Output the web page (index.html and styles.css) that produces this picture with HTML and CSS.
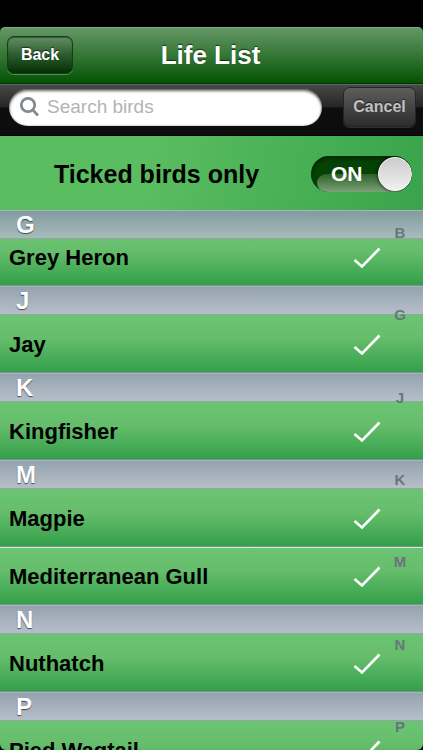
FILE: index.html
```html
<!DOCTYPE html>
<html lang="en">
<head>
<meta charset="utf-8">
<meta name="viewport" content="width=device-width, initial-scale=1">
<title>Life List</title>
<link rel="stylesheet" href="styles.css">
</head>
<body>
<div class="app">
  <header class="navbar">
    <button class="btn btn-back" type="button">Back</button>
    <h1 class="title">Life List</h1>
  </header>
  <form class="searchbar">
    <label class="search">
      <svg class="search-icon" viewBox="0 0 20 20" aria-hidden="true"><circle cx="8" cy="8" r="6.7"/><path d="M12.8 12.8L18 18.5"/></svg>
      <input class="search-input" type="search" placeholder="Search birds" aria-label="Search birds">
    </label>
    <button class="btn btn-cancel" type="button">Cancel</button>
  </form>
  <div class="filter">
    <label class="filter-label" for="ticked">Ticked birds only</label>
    <span class="switch">
      <input class="switch-input" id="ticked" type="checkbox" checked>
      <span class="switch-text">ON</span>
      <span class="knob"></span>
    </span>
  </div>
  <main class="list">
    <section>
      <h2 class="letter letter-pinned">G</h2>
      <ul class="birds">
        <li class="bird">Grey Heron<svg class="tick" viewBox="0 0 28 22" aria-hidden="true"><path d="M1.5 13L9 19.5L26.5 1.5"/></svg></li>
      </ul>
    </section>
    <section>
      <h2 class="letter">J</h2>
      <ul class="birds">
        <li class="bird">Jay<svg class="tick" viewBox="0 0 28 22" aria-hidden="true"><path d="M1.5 13L9 19.5L26.5 1.5"/></svg></li>
      </ul>
    </section>
    <section>
      <h2 class="letter">K</h2>
      <ul class="birds">
        <li class="bird">Kingfisher<svg class="tick" viewBox="0 0 28 22" aria-hidden="true"><path d="M1.5 13L9 19.5L26.5 1.5"/></svg></li>
      </ul>
    </section>
    <section>
      <h2 class="letter">M</h2>
      <ul class="birds">
        <li class="bird">Magpie<svg class="tick" viewBox="0 0 28 22" aria-hidden="true"><path d="M1.5 13L9 19.5L26.5 1.5"/></svg></li>
        <li class="bird">Mediterranean Gull<svg class="tick" viewBox="0 0 28 22" aria-hidden="true"><path d="M1.5 13L9 19.5L26.5 1.5"/></svg></li>
      </ul>
    </section>
    <section>
      <h2 class="letter">N</h2>
      <ul class="birds">
        <li class="bird">Nuthatch<svg class="tick" viewBox="0 0 28 22" aria-hidden="true"><path d="M1.5 13L9 19.5L26.5 1.5"/></svg></li>
      </ul>
    </section>
    <section>
      <h2 class="letter">P</h2>
      <ul class="birds">
        <li class="bird">Pied Wagtail<svg class="tick" viewBox="0 0 28 22" aria-hidden="true"><path d="M1.5 13L9 19.5L26.5 1.5"/></svg></li>
      </ul>
    </section>
    <nav class="index" aria-label="Sections">
      <span>B</span><span>G</span><span>J</span><span>K</span><span>M</span><span>N</span><span>P</span>
    </nav>
  </main>
</div>
</body>
</html>
```
FILE: styles.css
```css
* {
  box-sizing: border-box;
}

body {
  margin: 0;
  background: #000;
  font-family: "Liberation Sans", Arial, sans-serif;
}

h1, h2, ul {
  margin: 0;
  padding: 0;
}

.app {
  display: flex;
  flex-direction: column;
  height: 100vh;
  padding-top: 27px;
  overflow: hidden;
}

/* Title bar */
.navbar {
  display: grid;
  grid-template-columns: 1fr auto 1fr;
  align-items: center;
  flex: none;
  height: 57px;
  padding: 0 9px 2px 7px;
  border-top: 1px solid #7fab80;
  border-bottom: 1px solid #013801;
  border-radius: 5px 5px 0 0;
  background: linear-gradient(#649765, #347636 50%, #035303);
}

.title {
  color: #fff;
  font-size: 26px;
  line-height: 30px;
  text-shadow: 0 -1px 1px rgba(0, 0, 0, .6);
}

.btn {
  padding: 0;
  border-radius: 7px;
  font: bold 16px/20px "Liberation Sans", Arial, sans-serif;
  text-shadow: 0 -1px 1px rgba(0, 0, 0, .6);
}

.btn-back {
  width: 66px;
  height: 38px;
  border: 1px solid #123f14;
  background: linear-gradient(#648e66, #2c5c2e 50%, #022f03);
  box-shadow: 0 1px 0 rgba(255, 255, 255, .3), inset 0 1px 1px rgba(0, 0, 0, .4);
  color: #fff;
}

/* Search bar */
.searchbar {
  display: flex;
  align-items: center;
  gap: 21px;
  flex: none;
  height: 52px;
  padding: 0 7px 6px 9px;
  border-top: 1px solid #656565;
  border-bottom: 1px solid #000;
  background: linear-gradient(#484848, #252525 22px, #0d0d0d 23px, #0d0d0d);
}

.search {
  display: flex;
  align-items: center;
  gap: 7px;
  flex: 1;
  min-width: 0;
  height: 37px;
  padding: 0 11px;
  border-radius: 19px;
  background: #fff;
  box-shadow: inset 0 2px 3px rgba(0, 0, 0, .6), inset 0 0 2px rgba(0, 0, 0, .4);
}

.search-icon {
  flex: none;
  width: 20px;
  height: 20px;
  fill: none;
  stroke: #84898f;
  stroke-width: 2.7;
}

.search-input {
  flex: 1;
  min-width: 0;
  padding: 0;
  border: 0;
  outline: 0;
  background: transparent;
  font: 19px/24px "Liberation Sans", Arial, sans-serif;
}

.search-input::placeholder {
  color: #b3b3b3;
}

.btn-cancel {
  width: 73px;
  height: 40px;
  border: 1px solid #252525;
  background: linear-gradient(#5d5d5d, #2d2d2d);
  box-shadow: 0 1px 0 rgba(255, 255, 255, .15);
  color: #c2c2c2;
}

/* Filter */
.filter {
  display: flex;
  align-items: center;
  flex: none;
  height: 74px;
  padding: 2px 11px 0 2px;
  background: linear-gradient(100deg, #5abd60 35%, #39a44c);
}

.filter-label {
  flex: 1;
  font-size: 25px;
  font-weight: bold;
  line-height: 30px;
  text-align: center;
}

.switch {
  position: relative;
  display: flex;
  align-items: center;
  width: 101px;
  height: 36px;
  padding-left: 20px;
  border-radius: 18px;
  background: #044303;
  box-shadow: inset 0 2px 4px rgba(0, 0, 0, .5);
  overflow: hidden;
}

.switch::before {
  content: "";
  position: absolute;
  inset: 18px 0 0 6px;
  border-radius: 12px 0 0 12px;
  background: linear-gradient(#2d6128, #7ca177);
}

.switch-input {
  position: absolute;
  inset: 0;
  z-index: 1;
  width: 100%;
  height: 100%;
  margin: 0;
  opacity: 0;
}

.switch-text {
  position: relative;
  color: #fff;
  font-size: 21px;
  font-weight: bold;
  line-height: 24px;
}

.knob {
  position: absolute;
  top: 1px;
  right: 0;
  width: 34px;
  height: 34px;
  border: 1px solid #f8f8f8;
  border-radius: 50%;
  background: linear-gradient(#cbcbcb, #f1f1f1);
  box-shadow: 0 0 3px 1px rgba(0, 0, 0, .5);
}

/* List */
.list {
  position: relative;
  flex: 1;
  min-height: 0;
  border-radius: 0 0 6px 6px;
  overflow: hidden;
}

.letter {
  height: 29px;
  padding-left: 16px;
  border-top: 1px solid #a9b5bd;
  border-bottom: 1px solid #94a3a6;
  background: linear-gradient(#94a3b0, #b6bfc9);
  color: #fff;
  font-size: 24px;
  line-height: 28px;
  text-shadow: 0 1px 1px rgba(0, 0, 0, .6);
}

.letter-pinned {
  position: relative;
  z-index: 1;
  margin-bottom: -11px;
  background: linear-gradient(#829b9f, #a8bbbb);
}

.birds {
  list-style: none;
}

.bird {
  display: flex;
  align-items: center;
  justify-content: space-between;
  height: 58px;
  padding: 2px 42px 0 9px;
  border-bottom: 1px solid #789486;
  background: linear-gradient(#6bc472, #66be6c 40%, #35a04b 98%);
  font-size: 22px;
  font-weight: bold;
  line-height: 26px;
}

.bird + .bird {
  border-top: 1px solid #d3eed4;
}

.tick {
  width: 28px;
  height: 22px;
  fill: none;
  stroke: #fff;
  stroke-width: 2.6;
}

/* Section index laid over the list */
.index {
  position: absolute;
  z-index: 2;
  top: 15px;
  right: 15px;
  bottom: 15px;
  display: flex;
  flex-direction: column;
  justify-content: space-between;
  width: 16px;
  color: #66777b;
  font-size: 15px;
  font-weight: bold;
  line-height: 16px;
  text-align: center;
}
```
